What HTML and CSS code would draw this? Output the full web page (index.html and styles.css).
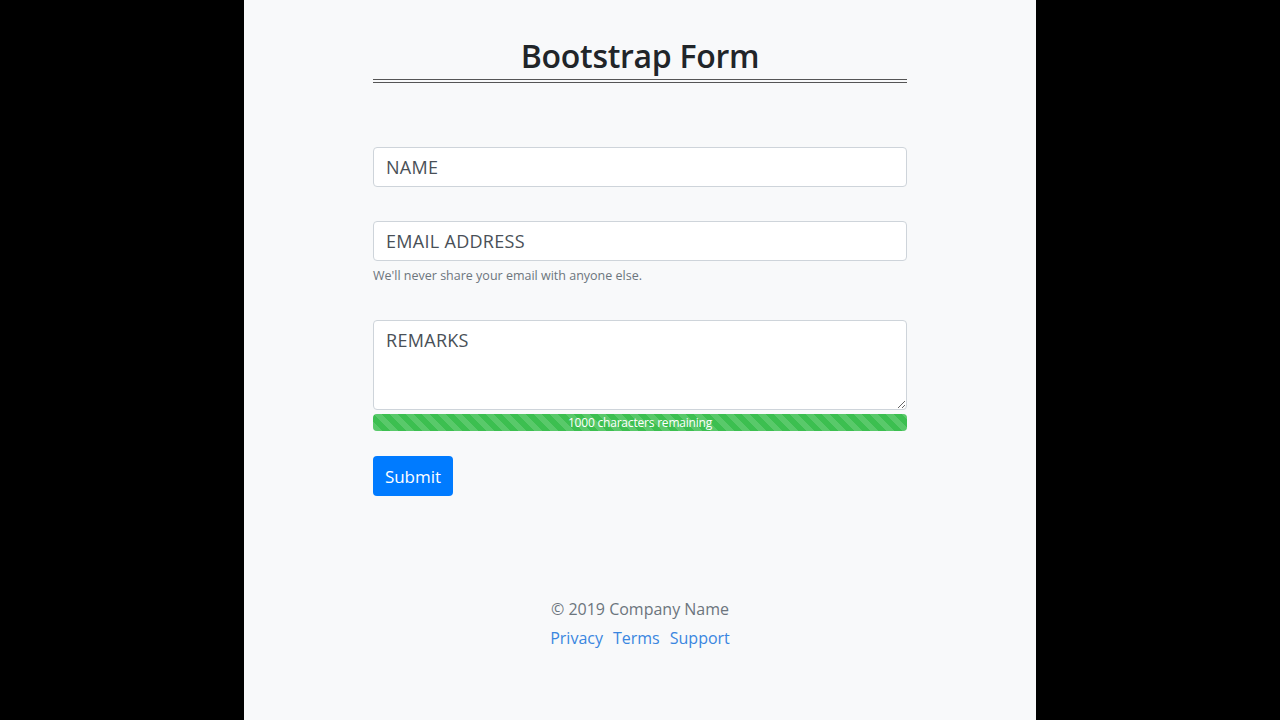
FILE: index.html
```html
<!DOCTYPE html>
<html lang="en">
<head>
    <meta charset="UTF-8">
    <meta name="viewport" content="width=device-width, initial-scale=1.0">
    <title>Bootstrap Form</title>
    <link rel="stylesheet" href="styles.css">
</head>
<body>
    <div class="page">
        <main class="container">
            <h1 class="title">Bootstrap Form</h1>

            <form class="form">
                <div class="form-group">
                    <input type="text" class="form-control" placeholder="NAME">
                </div>

                <div class="form-group">
                    <input type="email" class="form-control" placeholder="EMAIL ADDRESS">
                    <small class="form-text">We'll never share your email with anyone else.</small>
                </div>

                <div class="form-group">
                    <textarea class="form-control remarks" placeholder="REMARKS"></textarea>
                    <div class="progress">
                        <div class="progress-bar">1000 characters remaining</div>
                    </div>
                </div>

                <button type="submit" class="btn-submit">Submit</button>
            </form>

            <footer class="footer">
                <p class="copyright">&copy; 2019 Company Name</p>
                <div class="footer-links">
                    <a href="#">Privacy</a>
                    <a href="#">Terms</a>
                    <a href="#">Support</a>
                </div>
            </footer>
        </main>
    </div>
</body>
</html>
```

FILE: styles.css
```css
* {
    margin: 0;
    padding: 0;
    box-sizing: border-box;
    font-family: 'Open Sans', 'Noto Sans', sans-serif;
}

:root {
    --primary: #007bff;
    --success: #28a745;
    --muted: #6c757d;
    --text: #212529;
}

body {
    background: #000;
}

.page {
    width: 792px;
    min-height: 720px;
    margin: 0 auto;
    background: #f8f9fa;
}

.container {
    width: 534px;
    margin: 0 auto;
    padding-top: 34px;
}

.title {
    text-align: center;
    font-size: 32px;
    font-weight: 600;
    color: var(--text);
    line-height: 44px;
    padding-bottom: 1px;
    border-bottom: 4px double #555;
    letter-spacing: -0.3px;
}

.form {
    padding-top: 64px;
}

.form-group {
    margin-bottom: 34px;
}

.form-control {
    display: block;
    width: 100%;
    height: 40px;
    padding: 0 12px;
    font-size: 18px;
    color: #495057;
    background: #fff;
    border: 1px solid #ced4da;
    border-radius: 4px;
    letter-spacing: 0.3px;
}

.form-control::placeholder {
    color: #495057;
    opacity: 1;
}

.form-text {
    display: block;
    margin-top: 6px;
    padding-bottom: 2px;
    font-size: 12.5px;
    color: var(--muted);
}

.remarks {
    height: 90px;
    padding-top: 7px;
    resize: vertical;
    font-size: 18px;
}

.progress {
    margin-top: 4px;
    height: 17px;
    border-radius: 4px;
    overflow: hidden;
    background: #e9ecef;
    margin-bottom: -9px;
}

.progress-bar {
    height: 100%;
    width: 100%;
    background-color: #3cbf50;
    background-image: linear-gradient(45deg,
        rgba(255,255,255,.15) 25%, transparent 25%,
        transparent 50%, rgba(255,255,255,.15) 50%,
        rgba(255,255,255,.15) 75%, transparent 75%, transparent);
    background-size: 16px 16px;
    color: #fff;
    font-size: 12px;
    line-height: 17px;
    text-align: center;
    letter-spacing: -0.2px;
}

.btn-submit {
    width: 80px;
    height: 40px;
    background: var(--primary);
    color: #fff;
    border: none;
    border-radius: 4px;
    font-size: 17px;
    cursor: pointer;
}

.footer {
    margin-top: 99px;
    text-align: center;
    font-size: 16px;
}

.copyright {
    color: var(--muted);
    line-height: 28px;
}

.footer-links {
    display: flex;
    justify-content: center;
    gap: 10px;
    line-height: 30px;
}

.footer-links a {
    color: #3a86e0;
    text-decoration: none;
}
```
